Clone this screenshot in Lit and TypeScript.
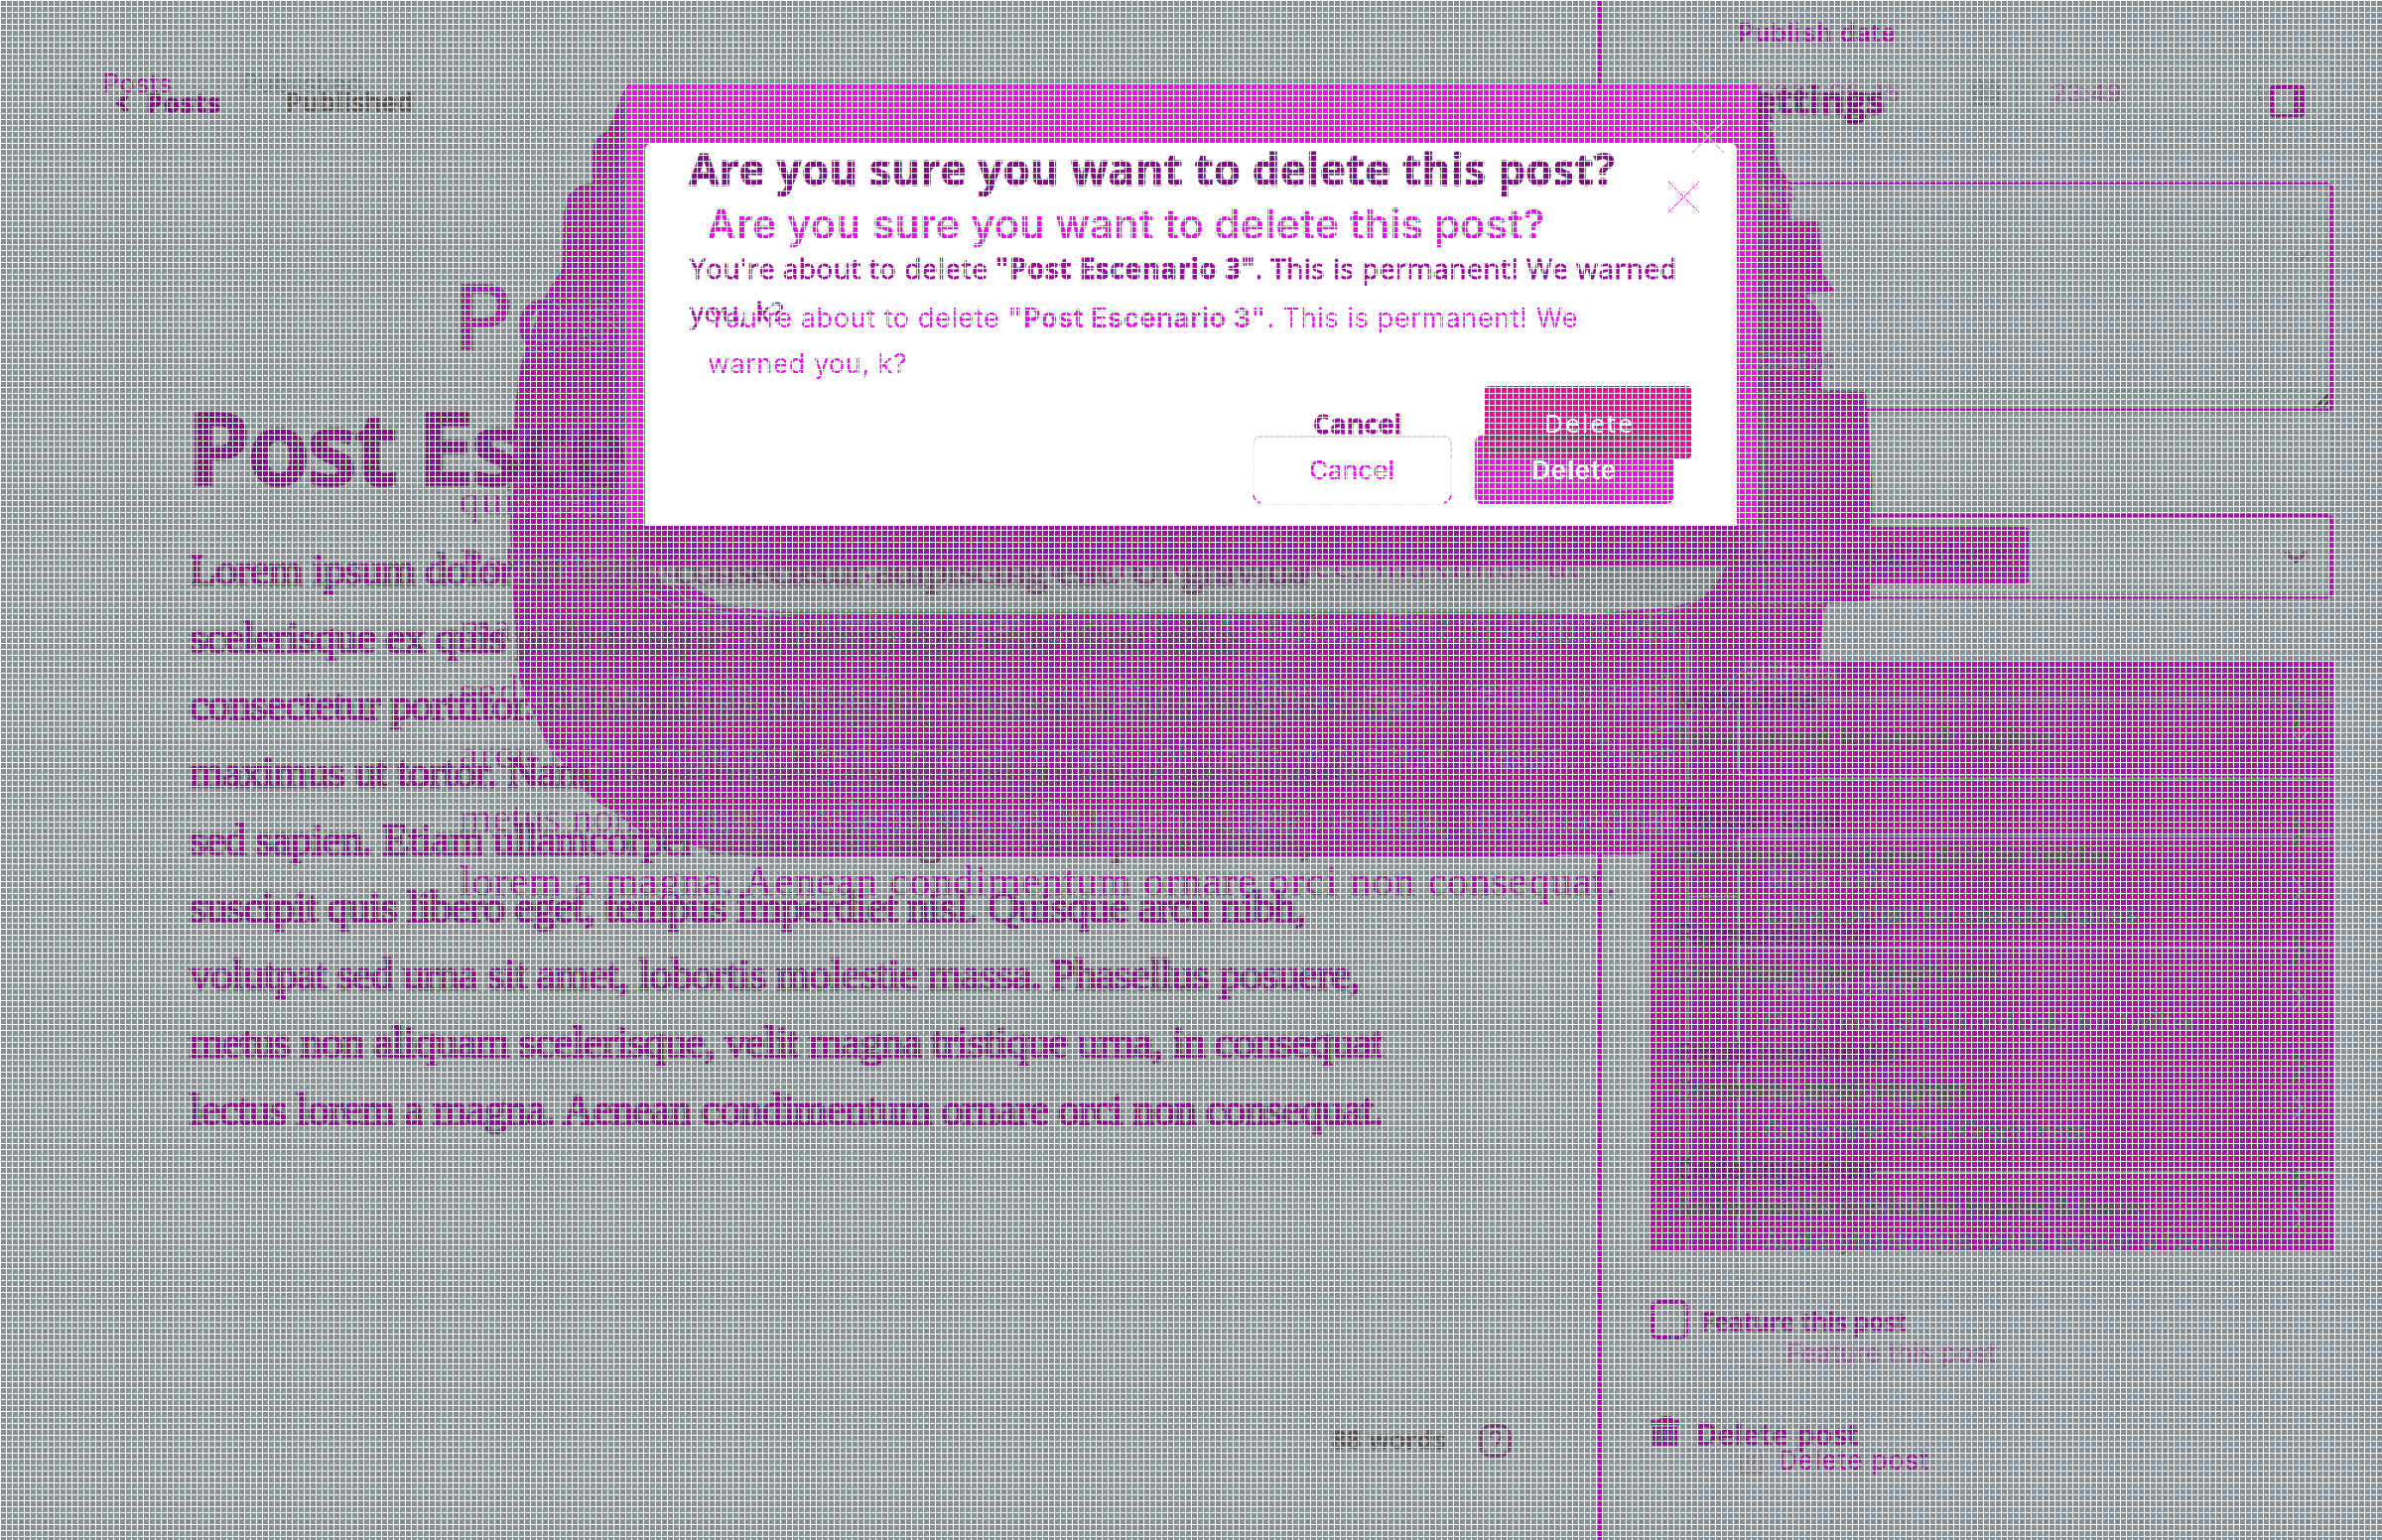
import { LitElement, html, css, svg } from "lit";
import { customElement } from "lit/decorators.js";
import { styleMap } from "lit/directives/style-map.js";

// Text, width, and how many leading characters lie on the plain ground.
type Line = [string, number, number?];

const BOLD_BODY: Line[] = [
  ["Lorem ipsum dolor sit amet, consectetur adipiscing elit. Ut gravida", 1126, 18],
  ["scelerisque ex quis pellentesque. Vivamus eget eros vitae tellus", 1063, 20],
  ["consectetur porttitor. Pellentesque dui ligula, consequat quis feugiat nec,", 1216, 22],
  ["maximus ut tortor. Nam massa mauris, congue id pulvinar eget, iaculis", 1188, 22],
  ["sed sapien. Etiam ullamcorper commodo sagittis. Duis purus lacus,", 1129, 29],
  ["suscipit quis libero eget, tempus imperdiet nisl. Quisque arcu nibh,", 1124],
  ["volutpat sed urna sit amet, lobortis molestie massa. Phasellus posuere,", 1179],
  ["metus non aliquam scelerisque, velit magna tristique urna, in consequat", 1202],
  ["lectus lorem a magna. Aenean condimentum ornare orci non consequat.", 1202],
];

const LIGHT_BODY: Line[] = [
  ["quis pellentesque.", 320],
  ["Pellentesque dui ligula, consequat quis feugiat nec, maximus ut", 1130],
  ["mauris, congue id pulvinar eget, iaculis sed sapien. Etiam commodo", 1228],
  ["sed ipsum. Duis purus lacus, suscipit quis libero eget, tempus nisl", 1226],
  ["arcu nibh, volutpat sed urna sit amet, lobortis molestie massa. Phas", 1226],
  ["metus non aliquam scelerisque, velit magna tristique urna, in consequat", 1226],
  ["lorem a magna. Aenean condimentum ornare orci non consequat.", 1166],
];

const ROWS: [string, number, string, number][] = [
  ["Meta data", 142, "Extra content for search engines", 381],
  ["Twitter card", 167, "Customise structured data for twitter", 440],
  ["Facebook card", 198, "Customise Open Graph data", 326],
  ["Email newsletter", 237, "Customise email settings", 292],
  ["Code injection", 200, "Add styles/scripts to the header & footer", 479],
];

const LIGHT_ROWS: [string, number, string, number][] = [
  ["Meta data", 127, "Extra content for search engines", 376],
  ["Twitter card", 150, "Customise structured data for Twitter", 435],
  ["Facebook card", 176, "Customise Open Graph data", 325],
  ["Code injection", 176, "Add styles/scripts to the header & footer", 472],
];

// Distance from the middle of the line box to the baseline, in em.
const MIDDLE = { os: 0.388, it: 0.364, se: 0.3375 };

@customElement("app-root")
export class AppRoot extends LitElement {
  static styles = css`
    :host { display: block; width: 2400px; height: 1552px; overflow: hidden; }
    .stage { position: relative; width: 2400px; height: 1552px; overflow: hidden; background: #868f92; }
    .art, .grid, .layer { position: absolute; inset: 0; width: 2400px; height: 1552px; }
    .grid {
      pointer-events: none;
      background:
        repeating-linear-gradient(90deg, #fff 0 1px, transparent 1px 6px),
        repeating-linear-gradient(180deg, #fff 0 1px, transparent 1px 6px);
    }
    .t { position: absolute; line-height: 0; white-space: pre; height: 0; }
    .fit { display: inline-block; white-space: pre; }
    .os { font-family: "Open Sans", sans-serif; }
    .it { font-family: Inter, sans-serif; }
    .bold { font-weight: 700; }
    .semi { font-weight: 600; }
    .med { font-weight: 500; }
    .deep { color: #8b008b; -webkit-text-stroke: 1px #8b008b; text-shadow: 0 0 3px #4e5652, 0 0 2px #5d6561; }
    .deep2 { color: #a000a0; -webkit-text-stroke: 0.5px #a000a0; text-shadow: 0 0 3px #555b55, 0 0 2px #686f6a; }
    .onfill { color: #980098; text-shadow: 0 0 1px #4f6455, 0 0 2px #4f6455, 0 0 3px #4f6455, 0 0 3px #4f6455; }
    .dark { color: #57504f; -webkit-text-stroke: 0.9px #57504f; text-shadow: 0 0 2px #6c6f6c; }
    .pure { color: #8b008b; -webkit-text-stroke: 0.8px #8b008b; }
    .pure2 { color: #a400a4; -webkit-text-stroke: 0.8px #a400a4; }
    .thin { color: #b000b0; text-shadow: 0 0 1px #6b7974; }
    .faint { color: #9a4a9e; }
    .hot { color: #f0f; }
    .slate { color: #64747a; }
    .white { color: #fff; }
    .ghost { color: #b900b9; -webkit-text-stroke: 1px #6f8278; }
    .story { position: absolute; left: 191px; top: 541px; width: 1300px; font: 400 44px/68px "Liberation Serif", serif; color: #980098; -webkit-text-stroke: 1.3px #980098; text-shadow: 0 0 3px #4f5650, 0 0 3px #565d57, 0 0 2px #5a615b, 1px 0 1px #626862; }
    .over { color: #7a2478; -webkit-text-stroke: 1.3px #6a4668; text-shadow: 0 0 1px #55695b, 0 0 2px #55695b, 0 0 2px #55695b, 0 0 3px #55695b; }
    .story.light { left: 463px; top: 472px; font: 400 42px/64px "Liberation Serif", serif; color: #b400b4; text-shadow: none; -webkit-text-stroke: 0.9px #6d7f75; }
    .story.light .line:last-child { -webkit-text-stroke: 0.5px #b400b4; }
    .line { white-space: pre; }
    .card { position: absolute; left: 1663px; top: 667px; width: 688px; height: 593px; display: flex; flex-direction: column; }
    .row { height: 119px; box-sizing: border-box; padding: 18px 29px 0 25px; display: flex; justify-content: space-between; white-space: pre; }
    .name { font: 700 28px/38px "Open Sans", sans-serif; color: #900090; text-shadow: 0 0 3px #4d6253, 0 0 3px #4d6253, 0 0 2px #4d6253, 0 0 1px #4d6253; }
    .hint { font: 600 24px/38px "Open Sans", sans-serif; color: #505050; -webkit-text-stroke: 1px #505050; text-shadow: 0 0 2px #5d695f, 0 0 2px #5d695f, 0 0 3px #5d695f; }
    .chev { width: 15px; height: 32px; margin-top: 19px; fill: none; stroke: #505852; stroke-width: 5; }
    .card.light { left: 1777px; top: 861px; width: 574px; height: 440px; }
    .light .row { height: 112.8px; padding: 5px 28px 0 0; }
    .light .name { font: 500 25px/36px Inter, sans-serif; color: #b900b9; text-shadow: none; -webkit-text-stroke: 1px #647c70; padding-left: 4px; }
    .light .hint { font: 400 25px/36px Inter, sans-serif; color: #4d6a68; text-shadow: none; -webkit-text-stroke: 0.7px #4d6a68; }
    .light .chev { stroke: #75867e; stroke-width: 2; height: 27px; margin-top: 17px; }
  `;

  firstUpdated() {
    // Spread each line to its set width.
    this.renderRoot.querySelectorAll<HTMLElement>(".fit").forEach((el) => {
      const want = Number(el.dataset.w);
      const have = el.getBoundingClientRect().width;
      const n = (el.textContent ?? "").length;
      if (want && n) el.style.letterSpacing = `${(want - have) / n}px`;
    });
  }

  private t(x: number, base: number, size: number, w: number, face: "os" | "it" | "se", cls: string, text: unknown) {
    const at = { left: `${x}px`, top: `${base - MIDDLE[face] * size}px`, fontSize: `${size}px` };
    return html`<div class="t ${face} ${cls}" style=${styleMap(at)}><span class="fit" data-w=${w}>${text}</span></div>`;
  }

  private story(lines: Line[], cls = "") {
    return html`<div class="story ${cls}">${lines.map(([s, w, cut]) => html`<div class="line"><span class="fit" data-w=${w}>${cut ? html`${s.slice(0, cut)}<span class="over">${s.slice(cut)}</span>` : s}</span></div>`)}</div>`;
  }

  private rows(rows: typeof ROWS, cls = "") {
    return html`<div class="card ${cls}">
      ${rows.map(([a, aw, b, bw]) => html`<div class="row">
        <div><div class="name"><span class="fit" data-w=${aw}>${a}</span></div><div class="hint"><span class="fit" data-w=${bw}>${b}</span></div></div>
        <svg class="chev" viewBox="0 0 15 32" preserveAspectRatio="none"><path d="M2 1 L12 16 L2 31" /></svg>
      </div>`)}
    </div>`;
  }

  private backdrop() {
    return html`<svg class="art" viewBox="0 0 2400 1552">
      <defs><linearGradient id="fade" x1="0" y1="0" x2="0" y2="1"><stop offset="0" stop-color="#727a7e" /><stop offset="1" stop-color="#818a8d" /></linearGradient></defs>
      ${svg`
      <rect x="1702" y="0" width="698" height="1552" fill="#858e94" />
      <g fill="#868f92" stroke="#788890" stroke-width="2">
        <rect x="1751" y="62" width="281" height="63" rx="5" />
        <rect x="2048" y="62" width="302" height="63" rx="5" />
        <rect x="1751" y="221" width="599" height="74" rx="4" />
        <rect x="1751" y="394" width="599" height="212" rx="4" />
        <path d="M1751 1180V1293H2350V1180" />
        <path d="M1753 1378h28" />
      </g>
      <path d="M1701 0V85" stroke="#7f8b91" stroke-width="2" />
      <path fill="#b900b9" d="M633 85 L626 97 613 130 600 140 597 152 597 184 584 187 573 196 568 215 567 270 553 292 547 303 530 350 525 368 520 400 518 430 516 500 514 530 517 600 523 683 541 727 553 753 569 770 589 797 603 809 617 817 648 840 680 846 704 854 760 863 1569 863 1569 861 1647 861 1663 859 1663 667 1833 665 1837 617 1841 608 1885 605 1886 480 1880 395 1835 393 1835 320 1830 310 1819 297 1848 293 1836 275 1832 223 1803 221 1803 184 1792 167 1788 150 1786 133 1779 123 1787 123 1771 85Z" />
      <rect x="1700" y="531" width="344" height="57" rx="4" fill="#b900b9" />
      <rect x="1663" y="667" width="688" height="593" fill="#b900b9" />
      <path fill="url(#fade)" d="M650 571H1738L1716 603 1682 613 1645 615 1600 620 1560 617H800L773 616 727 609 697 591 670 590Z" />
      <g fill="none" stroke="#6c7b73" stroke-width="2">
        <path d="M653 571 665 584 683 594 690 604 727 609 775 622M1738 571 1726 592 1700 611 1660 620M1664 571V600H1716" />
        <path d="M650 598 680 611 740 618 800 621" />
      </g>
      <path d="M628 96V560M624 150V540M1774 140V560M1778 400V600" stroke="#66776c" stroke-width="2" opacity=".7" />
      <path d="M1612 0V85M1612 861V1552" stroke="#b900b9" stroke-width="4" />
      <path d="M1612 622V740" stroke="#6f8278" stroke-width="1" />
      <g fill="none" stroke="#b800b8" stroke-width="3.500">
        <path d="M1800 185.500H2344Q2349 186 2349 190V409Q2349 413.500 2344 413.500H1880" />
        <path d="M1771 519.500H2344Q2349 520 2349 525V597Q2349 601.500 2344 601.500H1885" />
      </g>
      <g fill="none" stroke="#788a84" stroke-width="2">
        <path d="M1830 705.500H2351M1823 784.500H2351M1751 716V776L1756 781H2351M1701 640V790M1701 855V1260M1701 903.500H1751M1751 1260V846Q1752 843 1760 843H2351M1750 955.500H2351M1888 1181H2351M1788 1181" />
        <path d="M1662 755V738L1686 730M1700 722 1760 672M1722 728 1770 684" stroke="#66776c" />
        <path d="M2309 254 2317 263 2326 254" stroke="#647278" />
        <path d="M2309 737 2317 747 2326 737" />
        <path d="M1751 608H1838M1774 540H1885M1774 394H1880" stroke="#66776c" stroke-dasharray="4 4" />
      </g>
      <path d="M2333 411 2347 397M2340 411 2348 403" stroke="#4a3a4a" stroke-width="3" />
      <path d="M2303 556 2313 565 2324 556" fill="none" stroke="#6f4a6f" stroke-width="5" />
      <g fill="none" stroke="#6a787f" stroke-width="2"><path d="M1989 84H2013V105H1989ZM1989 91H2013M1989 98H2013M1997 84V105M2005 84V105M1995 79V87M2007 79V87" /><path d="M2277 86Q2272 95 2279 103M2290 88V95" /></g>
      <path d="M84 74 74 85 84 96" fill="none" stroke="#71818a" stroke-width="2" />
      <path d="M128 96 120 104 128 112" fill="none" stroke="#7d107d" stroke-width="5" />
      <g fill="none" stroke="#a500a5" stroke-width="4.500">
        <rect x="2289" y="88" width="31" height="28" rx="2" /><path d="M2315 88V116" stroke-width="10" />
        <rect x="1665" y="1312" width="34" height="36" rx="6" stroke-width="4" stroke-dasharray="9 1.500" />
      </g>
      <g fill="none" stroke="#703c70" stroke-width="3.500"><rect x="1492" y="1437" width="29" height="30" rx="10" /><path d="M1501 1449Q1502 1443 1507 1443T1512 1449Q1511 1453 1507 1455V1459" stroke-width="3" /></g>
      <g fill="#a500a0"><path d="M1663 1431H1671L1674 1427H1683L1686 1431H1692V1436H1663ZM1665 1438H1690V1457H1665Z" /><path d="M1672 1442V1453M1678 1442V1453M1684 1442V1453" stroke="#6c6c6c" stroke-width="1.500" /></g>
      <path d="M1754 1464V1484H1775V1464M1761 1467V1478M1767 1467V1478" fill="none" stroke="#806e70" stroke-width="2" />
      `}
    </svg>`;
  }

  private modal() {
    return html`<svg class="art" viewBox="0 0 2400 1552">
      ${svg`
      <path fill="#f0f" d="M638 85H1765Q1771 86 1771 92V530H631V92Q631 86 638 85Z" />
      <path fill="#fff" d="M658 144H1742Q1750 144 1750 152V530H650V152Q650 144 658 144Z" />
      <path fill="#b000b0" d="M650 530H1750V570H650Z" />
      <path d="M1705 122 1737 154M1737 122 1705 154" stroke="#e0a8e0" stroke-width="1.600" />
      <path d="M1681 183 1712 214M1712 183 1681 214" stroke="#f0f" stroke-width="1" />
      <rect x="1263" y="439.500" width="199" height="69" rx="7" fill="#fff" stroke="#eeeeee" stroke-width="1.500" />
      <path d="M1264 446Q1265 440 1270 440H1455Q1461 440 1462 446V462" fill="none" stroke="#d5dade" stroke-width="2" />
      <path d="M1263 499Q1264 505 1270 507M1462 499Q1461 505 1455 507" fill="none" stroke="#f0f" stroke-width="1.500" />
      <rect x="1486" y="439" width="200" height="69" rx="7" fill="#f0f" />
      <rect x="1496" y="389" width="208" height="73" rx="4" fill="#ff0090" />
      <path d="M1497 441H1680M1500 453H1684" stroke="#595057" stroke-width="3" />
      <path d="M1500 447H1684M1499 459H1686" stroke="#595057" stroke-width="2" stroke-dasharray="2 4" />
      `}
    </svg>
    ${this.t(694, 187, 44, 933, "os", "bold pure", "Are you sure you want to delete this post?")}
    ${this.t(712, 240.5, 41, 845, "it", "semi hot", "Are you sure you want to delete this post?")}
    ${this.t(695, 280.5, 28, 995, "os", "med pure2", html`You're about to delete <b>"Post Escenario 3"</b>. This is permanent! We warned`)}
    ${this.t(695, 324.5, 28, 95, "os", "med pure2", "you, k?")}
    ${this.t(713, 331, 27, 877, "it", "hot", html`You're about to delete <b>"Post Escenario 3"</b>. This is permanent! We`)}
    ${this.t(713, 377, 27, 201, "it", "hot", "warned you, k?")}
    ${this.t(1323, 437, 27, 90, "os", "bold pure2", "Cancel")}
    ${this.t(1319, 483, 26, 86, "it", "med hot", "Cancel")}
    ${this.t(1556, 436, 26, 91, "os", "white", "Delete")}
    ${this.t(1543, 483, 26, 86, "it", "semi white", "Delete")}`;
  }

  render() {
    return html`<main class="stage">
      ${this.backdrop()}
      <section class="layer">
        ${this.t(104, 93, 25, 70, "it", "thin", "Posts")}
        ${this.t(244, 93, 25, 121, "it", "slate", "Published")}
        ${this.t(458, 353, 92, 207, "it", "semi ghost", "Post")}
        ${this.story(LIGHT_BODY, "light")}
        ${this.t(1751, 42, 25, 160, "it", "semi thin", "Publish date")}
        ${this.t(1771, 103, 25, 144, "it", "thin faint", "2021-05-15")}
        ${this.t(2067, 103, 25, 71, "it", "thin faint", "23:49")}
        ${this.t(1752, 203, 25, 58, "it", "med ghost", "Tags")}
        ${this.t(1752, 371, 25, 96, "it", "med ghost", "Excerpt")}
        ${this.t(1755, 685, 25, 97, "it", "med ghost", "Authors")}
        ${this.rows(LIGHT_ROWS, "light")}
        ${this.t(1800, 1373, 26, 211, "it", "thin faint", "Feature this post")}
        ${this.t(1792, 1481, 26, 152, "it", "thin", "Delete post")}
      </section>
      <section class="layer">
        ${this.t(148, 112.5, 25, 75, "os", "bold deep", "Posts")}
        ${this.t(288, 112, 26, 129, "os", "semi dark", "Published")}
        ${this.t(188, 489, 103, 440, "os", "bold deep", "Post Esce")}
        ${this.story(BOLD_BODY)}
        ${this.t(1342, 1460, 25, 115, "os", "semi dark", "88 words")}
        ${this.t(1747, 115, 37, 152, "os", "bold deep", "Settings")}
        ${this.t(1750, 569, 27, 276, "os", "semi onfill", "bx:Automatizadas ×")}
        ${this.rows(ROWS)}
        ${this.t(1714, 1341, 25, 207, "os", "semi deep2", "Feature this post")}
        ${this.t(1709, 1456, 29, 164, "os", "semi deep2", "Delete post")}
      </section>
      <section class="layer">${this.modal()}</section>
      <div class="grid"></div>
    </main>`;
  }
}
